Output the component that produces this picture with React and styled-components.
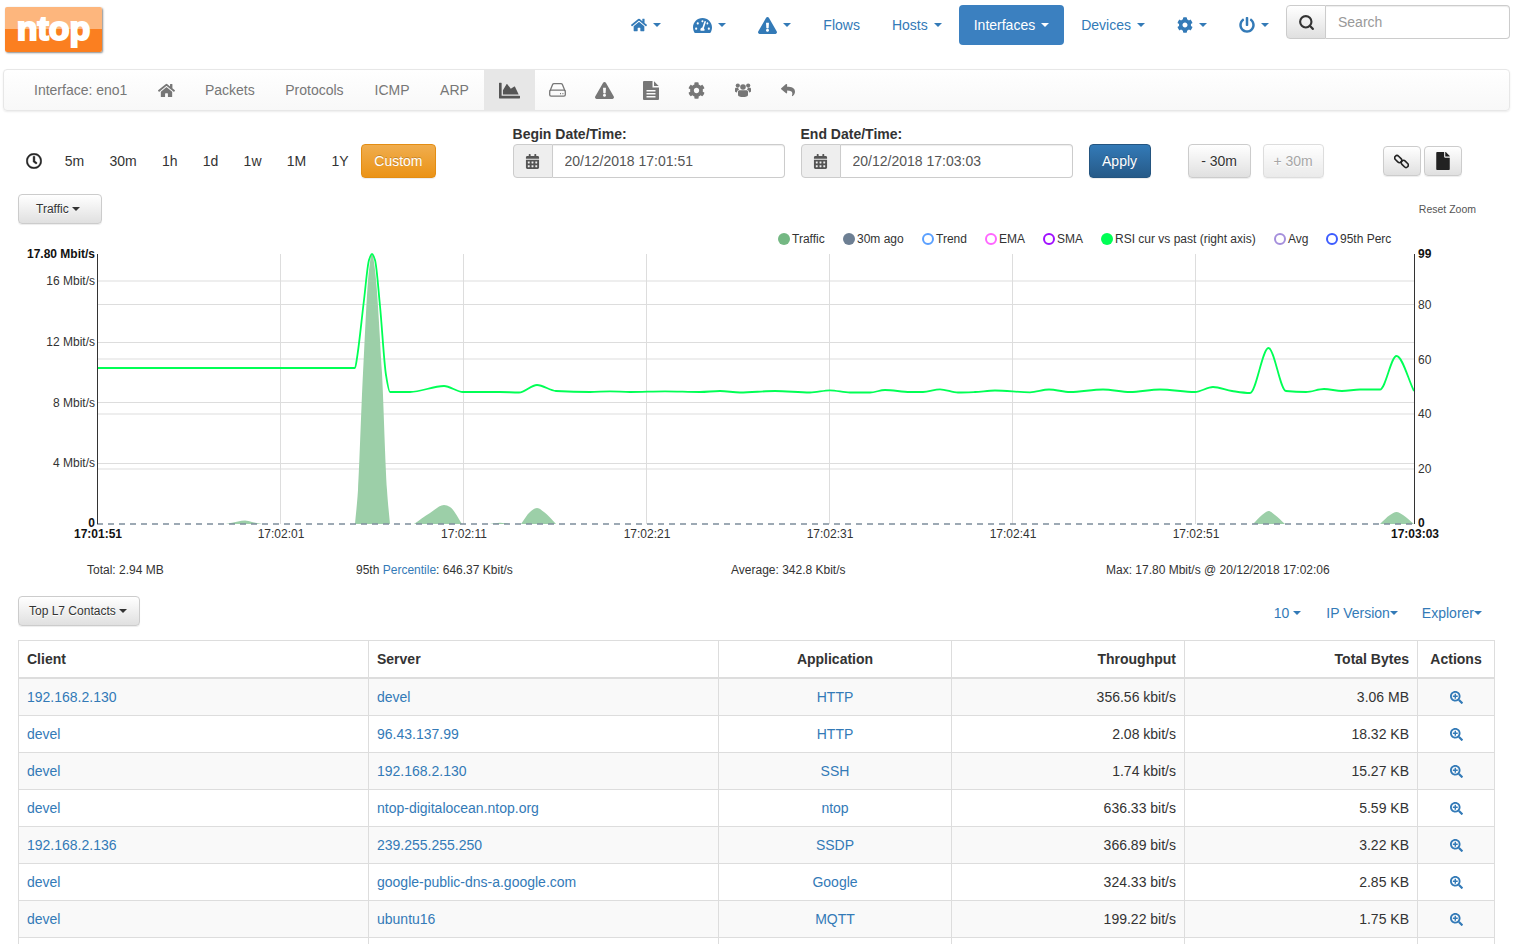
import React from "react";
import styled, { createGlobalStyle } from "styled-components";
import { Search } from "lucide-react";
import {
  FaHome,
  FaTachometerAlt,
  FaExclamationTriangle,
  FaCog,
  FaPowerOff,
  FaChartArea,
  FaReply,
  FaRegClock,
  FaCalendarAlt,
  FaFile,
  FaSearchPlus,
} from "react-icons/fa";

const GlobalStyle = createGlobalStyle`
  html, body {
    margin: 0;
    height: 100%;
    overflow: hidden;
    background: #fff;
  }
  body {
    font-family: "Liberation Sans", Arial, sans-serif;
    font-size: 14px;
    line-height: 20px;
    color: #333;
  }
  * {
    box-sizing: border-box;
  }
`;

// rows of the contacts table
const contacts = [
  ["192.168.2.130", "devel", "HTTP", "356.56 kbit/s", "3.06 MB"],
  ["devel", "96.43.137.99", "HTTP", "2.08 kbit/s", "18.32 KB"],
  ["devel", "192.168.2.130", "SSH", "1.74 kbit/s", "15.27 KB"],
  ["devel", "ntop-digitalocean.ntop.org", "ntop", "636.33 bit/s", "5.59 KB"],
  ["192.168.2.136", "239.255.255.250", "SSDP", "366.89 bit/s", "3.22 KB"],
  ["devel", "google-public-dns-a.google.com", "Google", "324.33 bit/s", "2.85 KB"],
  ["devel", "ubuntu16", "MQTT", "199.22 bit/s", "1.75 KB"],
];

const rsiLine = [
  [97, 368], [355, 368], [357, 358], [364, 300], [369, 260], [372, 254], [375, 260], [380, 306], [386, 375], [390, 392],
  [410, 392], [444, 386], [463, 392], [500, 392], [519, 392.5], [537, 385], [556, 391], [590, 392], [610, 391.3],
  [630, 392], [665, 391.3], [700, 392], [720, 391], [740, 392.5], [775, 391], [810, 392.5], [830, 390.3], [850, 392.5],
  [870, 392.5], [885, 390], [910, 392], [923, 392], [940, 389.3], [958, 392.5], [975, 392], [995, 390.5], [1030, 392.3],
  [1049, 389.5], [1070, 392], [1103, 389.5], [1130, 392], [1160, 389.5], [1195, 392], [1213, 387], [1232, 391],
  [1250, 393], [1268.5, 348], [1286, 391], [1306, 392], [1324, 389], [1342, 391], [1360, 389.5], [1380, 389.5],
  [1396.5, 356], [1414, 391],
];

const trafficBumps = [
  [[226, 524], [238, 521.5], [245, 520.5], [252, 522], [262, 524]],
  [[355, 524], [358, 490], [363, 373], [369, 270], [372, 254], [375, 270], [382, 373], [387, 490], [390, 524]],
  [[414, 524], [430, 513], [444, 505], [450, 507], [462, 524]],
  [[490, 524], [500, 522.8], [510, 524]],
  [[521, 524], [530, 512], [537, 508], [544, 512], [556, 524]],
  [[1253, 524], [1262, 515], [1268.5, 511], [1275, 515], [1285, 524]],
  [[1380, 524], [1390, 515], [1396.5, 512], [1403, 515], [1414, 524]],
];

const legend = [
  { label: "Traffic", x: 784, fill: "#74b883" },
  { label: "30m ago", x: 849, fill: "#6d7f93" },
  { label: "Trend", x: 928, ring: "#5aa0ff" },
  { label: "EMA", x: 991, ring: "#ff66ff" },
  { label: "SMA", x: 1049, ring: "#a010ff" },
  { label: "RSI cur vs past (right axis)", x: 1107, fill: "#00ff55" },
  { label: "Avg", x: 1280, ring: "#a58fdc" },
  { label: "95th Perc", x: 1332, ring: "#3d5cff" },
];

// monotone cubic, so the flat parts stay flat
const curve = (pts) => {
  const slopes = pts.slice(1).map((p, i) => (p[1] - pts[i][1]) / (p[0] - pts[i][0]));
  const tangents = pts.map((_, i) => {
    if (i === 0) return slopes[0];
    if (i === pts.length - 1) return slopes[i - 1];
    const a = slopes[i - 1];
    const b = slopes[i];
    return a * b <= 0 ? 0 : (2 * a * b) / (a + b);
  });
  let d = `M${pts[0][0]} ${pts[0][1]}`;
  for (let i = 1; i < pts.length; i++) {
    const dx = (pts[i][0] - pts[i - 1][0]) / 3;
    d += `C${pts[i - 1][0] + dx} ${pts[i - 1][1] + tangents[i - 1] * dx} ${pts[i][0] - dx} ${pts[i][1] - tangents[i] * dx} ${pts[i][0]} ${pts[i][1]}`;
  }
  return d;
};

// these three are closer to the old font-awesome glyphs than the packaged ones
const HddIcon = () => (
  <svg width="17" height="14" viewBox="0 0 17 14" fill="none" stroke="currentColor" strokeWidth="1.3">
    <path d="M1 8 3.6 1.6C3.9.9 4.4.7 5 .7h7c.6 0 1.1.2 1.4.9L16 8" />
    <rect x="0.7" y="7.2" width="15.6" height="6" rx="1.4" />
    <path d="M11 10.6h1M13.4 10.6h1" strokeWidth="1.2" />
  </svg>
);

const FileIcon = () => (
  <svg width="16" height="19" viewBox="0 0 16 19" fill="currentColor">
    <path
      fillRule="evenodd"
      d="M1 0h8.5v6.5H16V18a1 1 0 0 1-1 1H1a1 1 0 0 1-1-1V1a1 1 0 0 1 1-1ZM3.5 9v1.5h9V9ZM3.5 12v1.500h9V12ZM3.500 15v1.500h9V15Z"
    />
    <path d="M11 .3 15.700 5H11Z" />
  </svg>
);

const UsersIcon = () => (
  <svg width="16" height="14" viewBox="0 0 16 14" fill="currentColor">
    <circle cx="8" cy="4" r="2.800" />
    <circle cx="2.800" cy="2.600" r="2.100" />
    <circle cx="13.200" cy="2.600" r="2.100" />
    <path d="M4.300 7.200h7.400c.9 0 1.300.8 1.300 1.800v3c0 1.500-2.300 2-5 2s-5-.5-5-2V9c0-1 .4-1.800 1.300-1.800Z" />
    <path d="M0 6c0-.8.5-1.200 1.200-1.200h2c.1 1 .4 1.500 1 2-1.300.2-2.100 1-2.200 2.700C.7 9.300 0 9 0 8.200ZM16 6c0-.8-.5-1.200-1.200-1.200h-2c-.1 1-.4 1.500-1 2 1.300.2 2.100 1 2.200 2.700 1.300-.2 2-.5 2-1.300Z" />
  </svg>
);

const ChainIcon = () => (
  <svg width="15" height="15" viewBox="0 0 15 15" fill="none" stroke="currentColor" strokeWidth="1.600">
    <rect x="0.200" y="2.800" width="8" height="4.600" rx="2.300" transform="rotate(45 4.200 5.100)" />
    <rect x="6.800" y="7.600" width="8" height="4.600" rx="2.300" transform="rotate(45 10.800 9.900)" />
  </svg>
);

const Chart = () => (
  <ChartSvg viewBox="0 224 1516 330" width="1516" height="330">
    {legend.map((item) => (
      <g key={item.label}>
        {item.fill ? (
          <circle cx={item.x} cy="239" r="6" fill={item.fill} />
        ) : (
          <circle cx={item.x} cy="239" r="5" fill="#fff" stroke={item.ring} strokeWidth="2" />
        )}
        <ChartText x={item.x + 8} y="243">{item.label}</ChartText>
      </g>
    ))}

    {[281, 342.5, 402.5, 463.5, 304.5, 359, 414, 469].map((y) => (
      <GridLine key={y} x1="97" x2="1414" y1={y} y2={y} />
    ))}
    {[280.5, 463.5, 646.5, 829.5, 1012.5, 1195.5].map((x) => (
      <GridLine key={x} x1={x} x2={x} y1="254" y2="524" />
    ))}

    {trafficBumps.map((pts) => (
      <path key={pts[0][0]} d={`${curve(pts)}Z`} fill="#9ccfa8" />
    ))}
    <line x1="97" x2="1414" y1="524" y2="524" stroke="#7d8d9c" strokeWidth="1.5" strokeDasharray="6 5" />
    <path d={curve(rsiLine)} fill="none" stroke="#00ff55" strokeWidth="1.8" />

    <line x1="97.5" x2="97.5" y1="254" y2="524" stroke="#333" />
    <line x1="1414.5" x2="1414.5" y1="254" y2="524" stroke="#333" />

    <ChartText x="95" y="258" $end $bold>17.80 Mbit/s</ChartText>
    <ChartText x="95" y="285" $end>16 Mbit/s</ChartText>
    <ChartText x="95" y="346" $end>12 Mbit/s</ChartText>
    <ChartText x="95" y="407" $end>8 Mbit/s</ChartText>
    <ChartText x="95" y="467" $end>4 Mbit/s</ChartText>
    <ChartText x="95" y="527" $end $bold>0</ChartText>

    <ChartText x="1418" y="258" $bold>99</ChartText>
    <ChartText x="1418" y="309">80</ChartText>
    <ChartText x="1418" y="364">60</ChartText>
    <ChartText x="1418" y="418">40</ChartText>
    <ChartText x="1418" y="473">20</ChartText>
    <ChartText x="1418" y="527" $bold>0</ChartText>

    <ChartText x="98" y="538" $middle $bold>17:01:51</ChartText>
    <ChartText x="281" y="538" $middle>17:02:01</ChartText>
    <ChartText x="464" y="538" $middle>17:02:11</ChartText>
    <ChartText x="647" y="538" $middle>17:02:21</ChartText>
    <ChartText x="830" y="538" $middle>17:02:31</ChartText>
    <ChartText x="1013" y="538" $middle>17:02:41</ChartText>
    <ChartText x="1196" y="538" $middle>17:02:51</ChartText>
    <ChartText x="1415" y="538" $middle $bold>17:03:03</ChartText>
  </ChartSvg>
);

const App = () => {
  return (
    <Page>
      <GlobalStyle />
      <Header>
        <Logo><LogoText>ntop</LogoText></Logo>
        <TopNav>
          <Pill><FaHome size={16} /><Caret /></Pill>
          <Pill><FaTachometerAlt size={19} /><Caret /></Pill>
          <Pill><FaExclamationTriangle size={19} /><Caret /></Pill>
          <Pill>Flows</Pill>
          <Pill>Hosts<Caret /></Pill>
          <Pill $active>Interfaces<Caret /></Pill>
          <Pill>Devices<Caret /></Pill>
          <Pill><FaCog size={16} /><Caret /></Pill>
          <Pill><FaPowerOff size={16} /><Caret /></Pill>
        </TopNav>
        <SearchGroup>
          <SearchAddon><Search size={17} strokeWidth={3} /></SearchAddon>
          <SearchInput placeholder="Search" />
        </SearchGroup>
      </Header>

      <SubNav>
        <SubItem>Interface: eno1</SubItem>
        <SubItem><FaHome size={17} /></SubItem>
        <SubItem>Packets</SubItem>
        <SubItem $wide>Protocols</SubItem>
        <SubItem $wide>ICMP</SubItem>
        <SubItem>ARP</SubItem>
        <SubItem $active><FaChartArea size={21} /></SubItem>
        <SubItem $box={16}><HddIcon /></SubItem>
        <SubItem $box={18}><FaExclamationTriangle size={19} /></SubItem>
        <SubItem $box={15}><FileIcon /></SubItem>
        <SubItem $box={16}><FaCog size={17} /></SubItem>
        <SubItem $box={16}><UsersIcon /></SubItem>
        <SubItem $box={14}><FaReply size={14} /></SubItem>
      </SubNav>

      <TimeRow>
        <Presets>
          <ClockIcon><FaRegClock size={16} /></ClockIcon>
          <Preset>5m</Preset>
          <Preset>30m</Preset>
          <Preset>1h</Preset>
          <Preset>1d</Preset>
          <Preset>1w</Preset>
          <Preset>1M</Preset>
          <Preset>1Y</Preset>
          <Button $kind="warning">Custom</Button>
        </Presets>
        <DateField $first>
          <DateLabel>Begin Date/Time:</DateLabel>
          <InputGroup>
            <CalendarAddon><FaCalendarAlt size={15} /></CalendarAddon>
            <DateInput readOnly value="20/12/2018 17:01:51" />
          </InputGroup>
        </DateField>
        <DateField>
          <DateLabel>End Date/Time:</DateLabel>
          <InputGroup>
            <CalendarAddon><FaCalendarAlt size={15} /></CalendarAddon>
            <DateInput readOnly value="20/12/2018 17:03:03" />
          </InputGroup>
        </DateField>
        <ApplyButton $kind="primary">Apply</ApplyButton>
        <ShiftButton>- 30m</ShiftButton>
        <ShiftButton $disabled>+ 30m</ShiftButton>
        <IconButton $first><ChainIcon /></IconButton>
        <IconButton><FaFile size={18} /></IconButton>
      </TimeRow>

      <ChartHead>
        <SmallButton>Traffic<Caret /></SmallButton>
        <ResetZoom>Reset Zoom</ResetZoom>
      </ChartHead>
      <Chart />

      <Stats>
        <Stat $width={269}>Total: 2.94 MB</Stat>
        <Stat $width={375}>95th <StatLink>Percentile</StatLink>: 646.37 Kbit/s</Stat>
        <Stat $width={375}>Average: 342.8 Kbit/s</Stat>
        <Stat>Max: 17.80 Mbit/s @ 20/12/2018 17:02:06</Stat>
      </Stats>

      <TableBar>
        <SmallButton $tight>Top L7 Contacts<Caret /></SmallButton>
        <TableFilters>
          <Filter $spaced>10<Caret /></Filter>
          <Filter>IP Version<Caret $flush /></Filter>
          <Filter>Explorer<Caret $flush /></Filter>
        </TableFilters>
      </TableBar>

      <Table>
        <thead>
          <tr>
            <HeadCell $width={350}>Client</HeadCell>
            <HeadCell $width={350}>Server</HeadCell>
            <HeadCell $width={233} $align="center">Application</HeadCell>
            <HeadCell $width={233} $align="right">Throughput</HeadCell>
            <HeadCell $width={233} $align="right">Total Bytes</HeadCell>
            <HeadCell $width={77} $align="center">Actions</HeadCell>
          </tr>
        </thead>
        <tbody>
          {contacts.map((row, i) => (
            <Row key={i}>
              <Cell><TableLink>{row[0]}</TableLink></Cell>
              <Cell><TableLink>{row[1]}</TableLink></Cell>
              <Cell $align="center"><TableLink>{row[2]}</TableLink></Cell>
              <Cell $align="right">{row[3]}</Cell>
              <Cell $align="right">{row[4]}</Cell>
              <Cell $align="center"><TableLink><FaSearchPlus size={13} /></TableLink></Cell>
            </Row>
          ))}
          <Row>
            <Cell>&nbsp;</Cell>
            <Cell />
            <Cell />
            <Cell />
            <Cell />
            <Cell />
          </Row>
        </tbody>
      </Table>
    </Page>
  );
};

export default App;

const Page = styled.div`
  width: 1516px;
`;

const Header = styled.div`
  display: flex;
  align-items: flex-start;
  height: 69px;
  padding: 5px 6px 0 5px;
`;

const Logo = styled.div`
  width: 97px;
  height: 45px;
  margin-top: 2px;
  border-radius: 2px;
  overflow: hidden;
  text-align: center;
  background: linear-gradient(to bottom, #fdb67d 0, #fdb67d 50%, #fb7f20 50%, #fb7f20 100%);
  box-shadow: 1px 1px 2px rgba(60, 60, 60, 0.6);
`;

const LogoText = styled.span`
  display: block;
  margin-top: -1px;
  font-size: 34px;
  line-height: 45px;
  font-weight: bold;
  color: #fff;
  -webkit-text-stroke: 2px #fff;
`;

const TopNav = styled.div`
  display: flex;
  gap: 2px;
  margin-left: auto;
`;

const Pill = styled.div`
  display: flex;
  align-items: center;
  height: 40px;
  padding: 0 15px;
  border-radius: 4px;
  color: ${(p) => (p.$active ? "#fff" : "#337ab7")};
  background: ${(p) => (p.$active ? "#3b80c0" : "transparent")};
`;

const Caret = styled.span`
  display: inline-block;
  width: 0;
  height: 0;
  margin-left: ${(p) => (p.$flush ? "0" : "6px")};
  border-top: 4px solid currentColor;
  border-left: 4px solid transparent;
  border-right: 4px solid transparent;
`;

const SearchGroup = styled.div`
  display: flex;
  width: 224px;
  height: 34px;
  margin-left: 2px;
`;

const SearchAddon = styled.div`
  display: flex;
  align-items: center;
  justify-content: center;
  width: 40px;
  color: #333;
  border: 1px solid #ccc;
  border-radius: 4px 0 0 4px;
  background: linear-gradient(to bottom, #fff 0, #e0e0e0 100%);
`;

const SearchInput = styled.input`
  flex: 1;
  min-width: 0;
  padding: 0 12px;
  font: inherit;
  color: #555;
  border: 1px solid #ccc;
  border-left: 0;
  border-radius: 0 4px 4px 0;
  box-shadow: inset 0 1px 1px rgba(0, 0, 0, 0.075);
  &::placeholder {
    color: #999;
  }
`;

const SubNav = styled.div`
  display: flex;
  height: 42px;
  margin: 0 6px 0 3px;
  padding-left: 15px;
  border: 1px solid #e7e7e7;
  border-radius: 4px;
  background: linear-gradient(to bottom, #fff 0, #f8f8f8 100%);
  box-shadow: 0 1px 2px rgba(0, 0, 0, 0.08);
`;

const SubItem = styled.div`
  display: flex;
  align-items: center;
  justify-content: center;
  width: ${(p) => (p.$box ? `${p.$box + 30}px` : "auto")};
  padding: 0 ${(p) => (p.$box ? "0" : p.$wide ? "15.5px" : "15px")};
  color: #777;
  background: ${(p) => (p.$active ? "#e7e7e7" : "transparent")};
  svg {
    color: ${(p) => (p.$active ? "#555" : "#777")};
  }
  &:first-child {
    padding-right: 15.5px;
  }
`;

const TimeRow = styled.div`
  display: flex;
  align-items: flex-end;
  height: 54px;
  margin-top: 13px;
  padding-left: 26px;
`;

const Presets = styled.div`
  display: flex;
  align-items: center;
  height: 34px;
`;

const ClockIcon = styled.div`
  display: flex;
  width: 26px;
  color: #222;
  svg {
    stroke: currentColor;
    stroke-width: 14px;
  }
`;

const Preset = styled.div`
  padding: 0 12.65px;
  color: #333;
`;

const Button = styled.div`
  display: flex;
  align-items: center;
  justify-content: center;
  height: 34px;
  padding: 0 12px;
  border: 1px solid;
  border-radius: 4px;
  color: #fff;
  text-shadow: 0 -1px 0 rgba(0, 0, 0, 0.2);
  box-shadow: 0 1px 1px rgba(0, 0, 0, 0.075);
  border-color: ${(p) => (p.$kind === "warning" ? "#e38d13" : "#245580")};
  background: ${(p) =>
    p.$kind === "warning"
      ? "linear-gradient(to bottom, #f0ad4e 0, #eb9316 100%)"
      : "linear-gradient(to bottom, #337ab7 0, #265a88 100%)"};
`;

const DateField = styled.div`
  width: 272px;
  margin-left: ${(p) => (p.$first ? "77px" : "16px")};
`;

const DateLabel = styled.div`
  font-weight: bold;
  color: #333;
`;

const InputGroup = styled.div`
  display: flex;
  height: 34px;
`;

const CalendarAddon = styled.div`
  display: flex;
  align-items: center;
  justify-content: center;
  width: 40px;
  color: #555;
  background: #eee;
  border: 1px solid #ccc;
  border-radius: 4px 0 0 4px;
`;

const DateInput = styled.input`
  flex: 1;
  min-width: 0;
  padding: 0 12px;
  font: inherit;
  color: #555;
  border: 1px solid #ccc;
  border-left: 0;
  border-radius: 0 4px 4px 0;
  box-shadow: inset 0 1px 1px rgba(0, 0, 0, 0.075);
  outline: none;
`;

const ApplyButton = styled(Button)`
  width: 62px;
  margin-left: 16px;
`;

const GreyButton = styled.div`
  display: flex;
  align-items: center;
  justify-content: center;
  color: #333;
  border: 1px solid #ccc;
  border-radius: 4px;
  text-shadow: 0 1px 0 #fff;
  background: linear-gradient(to bottom, #fff 0, #e0e0e0 100%);
  box-shadow: 0 1px 1px rgba(0, 0, 0, 0.075);
`;

const ShiftButton = styled(GreyButton)`
  width: ${(p) => (p.$disabled ? "61px" : "63px")};
  height: 34px;
  margin-left: ${(p) => (p.$disabled ? "12px" : "37px")};
  opacity: ${(p) => (p.$disabled ? 0.65 : 1)};
  color: ${(p) => (p.$disabled ? "#777" : "#333")};
`;

const IconButton = styled(GreyButton)`
  width: 38px;
  height: 30px;
  margin-bottom: 2px;
  margin-left: ${(p) => (p.$first ? "59px" : "3px")};
  color: #222;
`;

const ChartHead = styled.div`
  display: flex;
  align-items: flex-start;
  justify-content: space-between;
  margin-top: 16px;
  padding: 0 40px 0 18px;
`;

const SmallButton = styled(GreyButton)`
  height: 30px;
  padding: ${(p) => (p.$tight ? "0 12px 0 10px" : "0 21px 0 17px")};
  font-size: 12px;
  line-height: 18px;
  ${Caret} {
    margin-left: 3px;
  }
`;

const ResetZoom = styled.div`
  margin-top: 5px;
  font-size: 10.5px;
  color: #555;
`;

const ChartSvg = styled.svg`
  display: block;
`;

const ChartText = styled.text`
  font-family: "Liberation Sans", Arial, sans-serif;
  font-size: 12px;
  fill: ${(p) => (p.$bold ? "#111" : "#333")};
  font-weight: ${(p) => (p.$bold ? "bold" : "normal")};
  text-anchor: ${(p) => (p.$end ? "end" : p.$middle ? "middle" : "start")};
`;

const GridLine = styled.line`
  stroke: #ddd;
  stroke-width: 1;
`;

const Stats = styled.div`
  display: flex;
  margin-top: 6px;
  padding-left: 87px;
  font-size: 12px;
  line-height: 20px;
`;

const Stat = styled.div`
  width: ${(p) => (p.$width ? `${p.$width}px` : "auto")};
  color: #333;
`;

const StatLink = styled.span`
  color: #337ab7;
`;

const TableBar = styled.div`
  display: flex;
  align-items: flex-start;
  justify-content: space-between;
  height: 30px;
  margin-top: 16px;
  padding: 0 34px 0 18px;
`;

const TableFilters = styled.div`
  display: flex;
  gap: 24px;
  margin-top: 7px;
`;

const Filter = styled.div`
  display: flex;
  align-items: center;
  padding-right: ${(p) => (p.$spaced ? "1px" : "0")};
  color: #337ab7;
  ${Caret} {
    margin-left: ${(p) => (p.$spaced ? "4px" : "0")};
  }
`;

const Table = styled.table`
  width: 1476px;
  margin: 14px 0 0 18px;
  table-layout: fixed;
  border-collapse: collapse;
`;

const HeadCell = styled.th`
  width: ${(p) => p.$width}px;
  padding: 8px;
  font-weight: bold;
  text-align: ${(p) => p.$align || "left"};
  border: 1px solid #ddd;
  border-bottom: 2px solid #ddd;
`;

const Row = styled.tr`
  &:nth-child(odd) {
    background: #f9f9f9;
  }
`;

const Cell = styled.td`
  padding: 8px;
  text-align: ${(p) => p.$align || "left"};
  border: 1px solid #ddd;
`;

const TableLink = styled.span`
  color: #337ab7;
  svg {
    vertical-align: -2px;
  }
`;
